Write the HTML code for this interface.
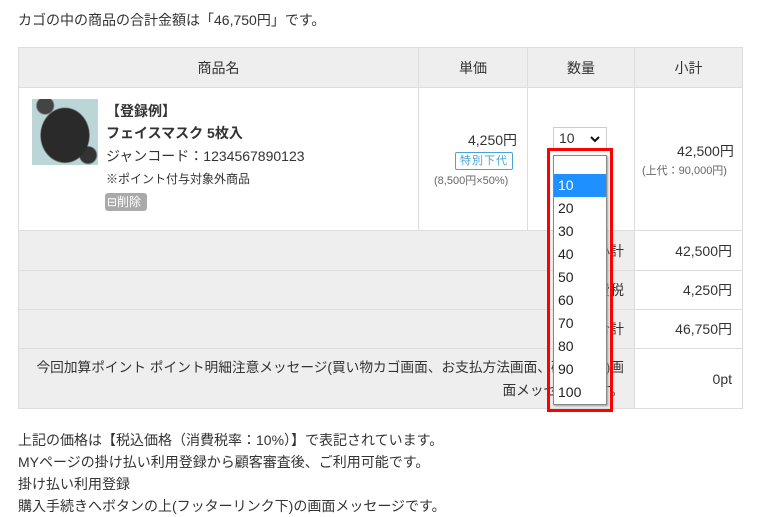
<!DOCTYPE html>
<html><head><meta charset="utf-8"><style>
*{box-sizing:border-box;margin:0;padding:0}
body{width:783px;height:503px;overflow:hidden;background:#fff;font-family:"Liberation Sans","Noto Sans CJK JP",sans-serif;color:#333;font-size:14px;position:relative}
.a{position:absolute}
table{position:absolute;left:18px;top:47px;border-collapse:collapse;width:725px;table-layout:fixed}
td,th{border:1px solid #ddd;font-weight:normal}
th{background:#eee;height:40px;font-size:14px}
.g{background:#eee}
.r{text-align:right;padding-right:10px}
</style></head><body>
<div class="a" style="left:18px;top:10px;font-size:14px">カゴの中の商品の合計金額は「46,750円」です。</div>
<table>
<colgroup><col style="width:400px"><col style="width:109px"><col style="width:107px"><col style="width:108px"></colgroup>
<tr><th>商品名</th><th>単価</th><th>数量</th><th>小計</th></tr>
<tr style="height:143px"><td></td><td></td><td></td><td></td></tr>
<tr style="height:40px"><td colspan="3" class="g r">小計</td><td class="r">42,500円</td></tr>
<tr style="height:39px"><td colspan="3" class="g r">消費税</td><td class="r">4,250円</td></tr>
<tr style="height:39px"><td colspan="3" class="g r">合計</td><td class="r">46,750円</td></tr>
<tr style="height:60px"><td colspan="3" class="g r" style="line-height:23px;white-space:nowrap;overflow:hidden;font-size:13.7px">今回加算ポイント ポイント明細注意メッセージ(買い物カゴ画面、お支払方法画面、確認画面)画<br>面メッセージです。</td><td class="r">0pt</td></tr>
</table>
<div class="a" style="left:32px;top:99px;width:66px;height:66px;background:radial-gradient(ellipse 40% 45% at 50% 55%,#2a2a2a 0 90%,transparent 95%),radial-gradient(circle at 85% 85%,#333 0 10%,transparent 12%),radial-gradient(circle at 20% 10%,#444 0 10%,transparent 12%),#bcd6d8;"></div>
<div class="a" style="left:106px;top:100px;font-weight:bold;line-height:22px">【登録例】<br>フェイスマスク 5枚入</div>
<div class="a" style="left:106px;top:146px">ジャンコード：1234567890123</div>
<div class="a" style="left:106px;top:170px;font-size:12px">※ポイント付与対象外商品</div>
<div class="a" style="left:105px;top:193px;width:42px;height:18px;background:#aaa;color:#fff;border-radius:3px;font-size:12px;line-height:18px;padding-left:2px">⊟削除</div>
<div class="a" style="left:468px;top:130px">4,250円</div>
<div class="a" style="left:455px;top:152px;width:58px;height:18px;border:1px solid #4aa3d8;color:#4aa3d8;font-size:11px;line-height:16px;text-align:center;border-radius:2px;letter-spacing:1px">特別下代</div>
<div class="a" style="left:434px;top:172px;font-size:11px;color:#666">(8,500円×50%)</div>
<div class="a" style="left:553px;top:127px;width:54px;height:23px;border:1px solid #ccc;padding-left:5px;line-height:21px">10<svg class="a" style="right:6px;top:8px" width="10" height="7" viewBox="0 0 10 7"><path d="M1 1l4 4 4-4" stroke="#111" stroke-width="2" fill="none"/></svg></div>
<div class="a" style="left:677px;top:141px">42,500円</div>
<div class="a" style="left:642px;top:162px;font-size:11px;color:#666">(上代：90,000円)</div>
<div class="a" style="left:547px;top:148px;width:66px;height:264px;border:3px solid #f00"></div>
<div class="a" style="left:553px;top:155px;width:54px;height:250px;border:1px solid #888;background:#fff;box-shadow:1px 1px 2px #999;font-size:14px;line-height:23px;color:#222">
<div style="height:18px"></div>
<div style="background:#1e90ff;color:#fff;padding-left:4px">10</div>
<div style="padding-left:4px">20</div><div style="padding-left:4px">30</div><div style="padding-left:4px">40</div><div style="padding-left:4px">50</div><div style="padding-left:4px">60</div><div style="padding-left:4px">70</div><div style="padding-left:4px">80</div><div style="padding-left:4px">90</div><div style="padding-left:4px">100</div>
</div>
<div class="a" style="left:18px;top:429px;line-height:22px">上記の価格は【税込価格（消費税率：10%）】で表記されています。<br>MYページの掛け払い利用登録から顧客審査後、ご利用可能です。<br>掛け払い利用登録<br>購入手続きへボタンの上(フッターリンク下)の画面メッセージです。</div>
</body></html>
